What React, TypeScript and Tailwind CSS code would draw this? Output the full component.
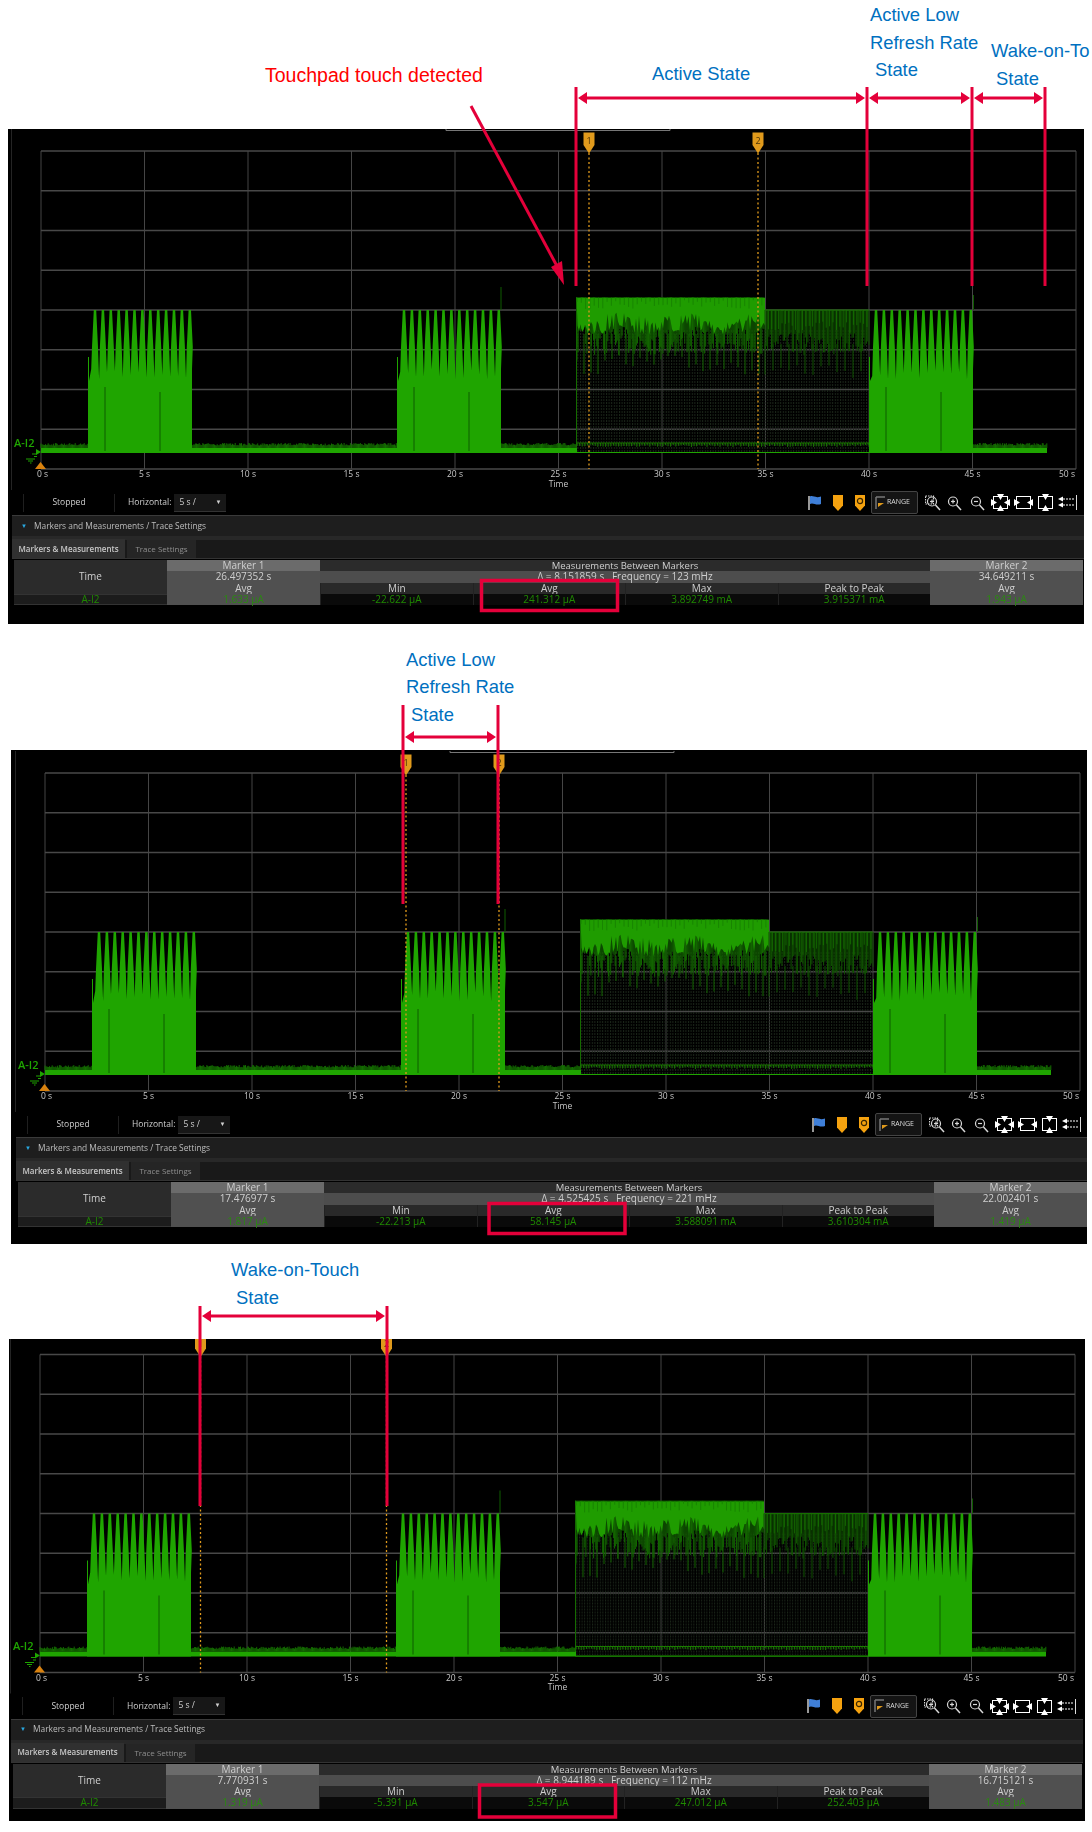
import * as React from 'react';

type ScopeProps = {
  crop: number;
  bottom: string;
  className: string;
  inner: string;
  markers: [number, number];
  marker1: string;
  marker2: string;
  avg1: string;
  avg2: string;
  delta: string;
  min: string;
  avg: string;
  max: string;
  p2p: string;
};

const AMBER = '#e09a1c';
const GREEN = '#1fa500';

// small repeatable random so the trace looks the same on each run
let seed = 7;
const rnd = () => {
  seed = (seed * 16807) % 2147483647;
  return seed / 2147483647;
};

const hairs = (x0: number, x1: number, step: number, y0: number, minY: number, maxY: number) => {
  let d = '';
  for (let x = x0; x < x1; x += step) {
    d += `M${x.toFixed(1)} ${y0}V${(minY + rnd() * (maxY - minY)).toFixed(1)}`;
  }
  return d;
};

const burstPath = (x0: number) => {
  let d = `M${x0} 324V228H${x0 + 1}V252`;
  for (let i = 0; i < 13; i++) {
    const peak = x0 + 7 + i * 7.9;
    const floor = 240 + rnd() * 11;
    d += `L${(peak - 3.8).toFixed(1)} ${floor.toFixed(1)}L${(peak - 3).toFixed(1)} 218L${(peak - 1.2).toFixed(1)} 181H${(peak + 1.2).toFixed(1)}L${(peak + 3).toFixed(1)} 218`;
  }
  d += `L${x0 + 104} 240V324Z`;
  return d;
};

const activeEdge = () => {
  let d = 'M568.6 169H757V196';
  for (let x = 755.5; x > 568; x -= 1.5) {
    d += `L${x} ${(186 + Math.sin(x * 0.09) * 3 + rnd() * 19).toFixed(1)}`;
  }
  return `${d}Z`;
};

const BURSTS = [80, 389, 861].map(burstPath);
const ACTIVE = activeEdge();
const ACTIVE_TEXTURE = hairs(569, 757, 4.3, 168.6, 171, 180);
const ACTIVE_FRINGE = hairs(569, 757, 1.1, 168, 198, 226) + hairs(569, 757, 7, 205, 226, 246);
const LOW_FRINGE = hairs(757, 861, 1.3, 181, 204, 226) + hairs(757, 861, 8, 215, 232, 250);
const LOW_LIGHT = hairs(757, 861, 3.4, 181, 192, 206);
const NOISE = [
  [33, 80],
  [184, 389],
  [493, 568],
  [965, 1039],
]
  .map(([a, b]) => hairs(a, b, 0.9, 319, 314, 316.5))
  .join('');
const TICKS = hairs(569, 861, 2.6, 314, 316, 318);

const Plot = (props: { crop: number; markers: [number, number]; id: string }) => {
  const height = 361 - props.crop;
  const gridX = Array.from({ length: 11 }, (_, i) => 33 + i * 103.5);
  const gridY = Array.from({ length: 9 }, (_, i) => 22 + i * 39.75);

  return (
    <svg
      className="block"
      width={1076}
      height={height}
      viewBox={`0 ${props.crop} 1076 ${height}`}
      style={{ fontFamily: '"Open Sans", sans-serif' }}
    >
      <defs>
        <pattern id={props.id} width="2.6" height="3" patternUnits="userSpaceOnUse">
          <rect width="1" height="2" fill="#1b261a" />
        </pattern>
      </defs>
      <path d="M438 0V1.5H662V0" fill="none" stroke="#777" />
      <rect x="3" y="0" width="1" height="361" fill="#242424" />

      {gridX.map((x) => (
        <line key={x} x1={x} x2={x} y1={22} y2={340} stroke="#454545" />
      ))}
      {gridY.map((y) => (
        <line key={y} x1={33} x2={1068} y1={y} y2={y} stroke="#484848" strokeWidth={1.5} />
      ))}

      <rect x="569" y="200" width="292" height="124" fill={`url(#${props.id})`} />
      <path d="M568.5 168V324" stroke="#156b00" />
      <path d={TICKS} stroke="#1a7a00" />
      <path d="M569 314H861M569 323.5H861" stroke="#1a7a00" />
      <path d={ACTIVE_FRINGE} stroke="#126400" />
      <path d={ACTIVE} fill="#1f9c00" />
      <path d={ACTIVE_TEXTURE} stroke="#178200" strokeWidth={0.9} />
      <path d={LOW_FRINGE} stroke="#0f5300" />
      <path d={LOW_LIGHT} stroke="#187a00" strokeWidth={0.7} />
      <path d="M757 181H861" stroke="#167000" />

      <rect x="33" y="319" width="1006" height="5" fill={GREEN} />
      <rect x="569" y="318" width="292" height="5" fill="#000" />
      <rect x="569" y="318" width="292" height="5" fill={`url(#${props.id})`} />
      <path d={NOISE} stroke="#146d00" />
      {BURSTS.map((d) => (
        <path key={d} d={d} fill={GREEN} />
      ))}
      <path
        d="M493 181V158M965.5 181V166M97 322V258M152 322V263M406 322V258M461 322V263M878 322V258M933 322V263"
        stroke="#0f5c00"
      />

      {gridX.map((x, i) => {
        const labelX = i === 0 ? 34.5 : i === 10 ? 1059 : x;
        return (
          <text key={x} x={labelX} y={348} fontSize="8.5" fill="#c8c8c8" textAnchor="middle">
            {i * 5} s
          </text>
        );
      })}
      <text x={550.5} y={357.5} fontSize="8.5" fill="#c8c8c8" textAnchor="middle">
        Time
      </text>

      <text x={6} y={317.5} fontSize="11" fill={GREEN} fontWeight="600">
        A-I2
      </text>
      <path d="M24 325H29M26 327.5H29M18 330H27M20 332H25M22 334H23.5" stroke={GREEN} fill="none" />
      <path d="M28 320L33 323L28 326Z" fill={GREEN} />
      <path d="M27 340L32.5 333L38 340Z" fill="#d9820f" />

      {props.markers.map((x, i) => (
        <g key={x}>
          <line x1={x} x2={x} y1={24} y2={340} stroke={AMBER} strokeWidth={1.3} strokeDasharray="2 2.5" />
          <path d={`M${x - 5.5} 3.5H${x + 5.5}V16L${x} 24.5L${x - 5.5} 16Z`} fill={AMBER} />
          <text x={x} y={14.5} fontSize="9" fill="#4a3205" textAnchor="middle">
            {i + 1}
          </text>
        </g>
      ))}
    </svg>
  );
};

const Flag = () => (
  <svg width="14" height="16" viewBox="0 0 14 16">
    <path d="M1 1V15" stroke="#fff" strokeWidth="1.2" />
    <path d="M2 1.5C5 0 7 3.5 13 1.5V9C8 11 5 7 2 9Z" fill="#3f7fd8" />
  </svg>
);

const MarkerIcon = () => (
  <svg width="10" height="16" viewBox="0 0 10 16">
    <path d="M0 0H10V10.5L5 16L0 10.5Z" fill="#f5a20f" />
  </svg>
);

const MarkerCycleIcon = () => (
  <svg width="10" height="16" viewBox="0 0 10 16">
    <path d="M0 0H10V10.5L5 16L0 10.5Z" fill="#f5a20f" />
    <circle cx="5" cy="6" r="2.6" fill="none" stroke="#3a2600" strokeWidth="1.2" />
  </svg>
);

const Lens = (props: { mark: 'plus' | 'minus' | 'box' }) => (
  <svg width="16" height="16" viewBox="0 0 16 16" fill="none" stroke="#d8d8d8" strokeWidth="1.2">
    {props.mark === 'box' ? <rect x="0.5" y="1" width="8" height="8" strokeDasharray="1.5 1" /> : null}
    <circle cx="7" cy="6.5" r="4.5" />
    <path d="M10.5 10L15 15" strokeWidth="1.5" />
    <path d="M5 6.5H9" />
    {props.mark === 'minus' ? null : <path d="M7 4.5V8.5" />}
  </svg>
);

const Fit = (props: { kind: 'all' | 'h' | 'v' }) => (
  <svg width="19" height="17" viewBox="0 0 19 17" fill="#fff">
    <rect x="2.5" y="2.5" width="14" height="12" fill="none" stroke="#fff" />
    {props.kind !== 'v' ? <path d="M0 5L6 8.5L0 12ZM19 5L13 8.5L19 12Z" /> : null}
    {props.kind !== 'h' ? <path d="M6 0L9.5 6L13 0ZM6 17L9.5 11L13 17Z" /> : null}
  </svg>
);

const Pan = () => (
  <svg width="19" height="15" viewBox="0 0 19 15" fill="#fff">
    <path d="M18.5 0V15" stroke="#ddd" />
    <path d="M5 4H16M5 10H16" stroke="#fff" strokeDasharray="2 1" />
    <path d="M0 4L5 1.5V6.5ZM0 10L5 7.5V12.5Z" />
  </svg>
);

const Toolbar = () => (
  <div className="flex h-[25px] items-center text-[8.5px] text-[#cfcfcf]">
    <div className="ml-[15px] flex h-[18px] w-[92px] items-center justify-center border-x border-[#1f1f1f]">Stopped</div>
    <span className="ml-[13px]">Horizontal:</span>
    <div className="ml-[3px] flex h-[18px] w-[52px] items-center justify-between border-b border-[#333] bg-[#171717] px-[5px]">
      <span>5 s /</span>
      <span className="text-[6px]">▼</span>
    </div>
    <div className="mr-[7px] ml-auto flex items-center">
      <Flag />
      <div className="ml-[11px]">
        <MarkerIcon />
      </div>
      <div className="ml-[12px]">
        <MarkerCycleIcon />
      </div>
      <div className="ml-[6px] flex h-[23px] w-[47px] items-center gap-[2px] rounded-[2px] border border-[#444] bg-[#141414] pl-[3px] text-[7px] text-[#ddd]">
        <svg width="10" height="14" viewBox="0 0 10 14">
          <path d="M1 1H10M1 1V13" stroke="#777" strokeWidth="1.5" />
          <path d="M3 5V11L9 7H3Z" fill="#e09a1c" />
        </svg>
        RANGE
      </div>
      <div className="ml-[7px]">
        <Lens mark="box" />
      </div>
      <div className="ml-[5px]">
        <Lens mark="plus" />
      </div>
      <div className="ml-[7px]">
        <Lens mark="minus" />
      </div>
      <div className="ml-[6px]">
        <Fit kind="all" />
      </div>
      <div className="ml-[4px]">
        <Fit kind="h" />
      </div>
      <div className="ml-[3px]">
        <Fit kind="v" />
      </div>
      <div className="ml-[3px]">
        <Pan />
      </div>
    </div>
  </div>
);

const Cell = (props: { className: string; children?: React.ReactNode }) => (
  <div className={`flex items-center justify-center whitespace-pre ${props.className}`}>{props.children}</div>
);

const Readings = (props: ScopeProps) => {
  const columns = [
    ['Min', props.min],
    ['Avg', props.avg],
    ['Max', props.max],
    ['Peak to Peak', props.p2p],
  ];

  return (
    <div className="mt-[1px] ml-[2px] grid w-[1069px] grid-cols-[153px_153px_repeat(4,152.5px)_153px] grid-rows-[repeat(4,11.25px)] text-[10px] leading-[11px] text-[#cfcfcf]">
      <Cell className="col-start-1 row-span-3 row-start-1 bg-[#2b2b2b]">Time</Cell>
      <Cell className="col-start-1 row-start-4 border-y border-[#333] bg-[#1c1c1c] text-[#1f8a00]">A-I2</Cell>

      <Cell className="col-start-2 row-start-1 bg-[#6b6b6b]">Marker 1</Cell>
      <Cell className="col-start-2 row-start-2 bg-[#505050]">{props.marker1}</Cell>
      <Cell className="col-start-2 row-start-3 bg-[#505050]">Avg</Cell>
      <Cell className="col-start-2 row-start-4 bg-[#505050] text-[#2a8a10]">{props.avg1}</Cell>

      <Cell className="col-span-4 col-start-3 row-start-1 bg-[#2b2b2b] text-[9.5px]">Measurements Between Markers</Cell>
      <Cell className="col-span-4 col-start-3 row-start-2 bg-[#4d4d4d]">{props.delta}</Cell>
      {columns.map(([label, value], i) => (
        <React.Fragment key={label}>
          <Cell className="row-start-3 border-l border-[#222] bg-[#292929]">{label}</Cell>
          <Cell className={`row-start-4 border-l border-[#222] bg-[#0a0a0a] text-[#1f8a00] ${i === 0 ? 'col-start-3' : ''}`}>
            {value}
          </Cell>
        </React.Fragment>
      ))}

      <Cell className="col-start-7 row-start-1 bg-[#6b6b6b]">Marker 2</Cell>
      <Cell className="col-start-7 row-start-2 bg-[#505050]">{props.marker2}</Cell>
      <Cell className="col-start-7 row-start-3 bg-[#505050]">Avg</Cell>
      <Cell className="col-start-7 row-start-4 bg-[#505050] text-[#2a8a10]">{props.avg2}</Cell>
    </div>
  );
};

const Scope = (props: ScopeProps & { id: string }) => (
  <div className={`w-[1076px] overflow-hidden bg-black font-['Open_Sans',sans-serif] ${props.className} ${props.bottom}`}>
    <div className={`w-[1076px] blur-[0.35px] ${props.inner}`}>
      <Plot crop={props.crop} markers={props.markers} id={props.id} />
      <Toolbar />
      <div className="ml-[4px] border-t border-[#3a3a3a]">
        <div className="flex h-[20px] items-center gap-[7px] bg-[#1e1e1e] pl-[9px] text-[8.4px] text-[#bdbdbd]">
          <span className="text-[6px] text-[#29a8e0]">▼</span>
          Markers and Measurements / Trace Settings
        </div>
        <div className="h-[4px] bg-[#282828]" />
        <div className="flex h-[19px] items-end gap-[2px] border-b border-[#333] bg-[#191919] text-[8px]">
          <div className="flex h-[19px] w-[113px] items-center justify-center bg-[#303030] font-semibold text-[#c8c8c8]">
            Markers &amp; Measurements
          </div>
          <div className="flex h-[18px] w-[69px] items-center justify-center bg-[#252525] text-[#8f8f8f]">
            Trace Settings
          </div>
        </div>
        <Readings {...props} />
      </div>
    </div>
  </div>
);

const Bracket = (props: { xs: number[]; top: number; bottom: number; y: number }) => (
  <g>
    {props.xs.map((x) => (
      <line key={x} x1={x} x2={x} y1={props.top} y2={props.bottom} stroke="#e4003a" strokeWidth={3} />
    ))}
    {props.xs.slice(1).map((x, i) => {
      const from = props.xs[i];
      return (
        <path
          key={x}
          d={`M${from + 2} ${props.y}l9 -6v4.5H${x - 11}v-4.5l9 6l-9 6v-4.5H${from + 11}v4.5Z`}
          fill="#e4003a"
        />
      );
    })}
  </g>
);

const labels = [
  { text: 'Touchpad touch detected', x: 265, y: 65, color: 'text-[#ff0000] text-[19.5px]' },
  { text: 'Active State', x: 652, y: 64 },
  { text: 'Active Low', x: 870, y: 5 },
  { text: 'Refresh Rate', x: 870, y: 33 },
  { text: 'State', x: 875, y: 60 },
  { text: 'Wake-on-To', x: 991, y: 41 },
  { text: 'State', x: 996, y: 69 },
  { text: 'Active Low', x: 406, y: 650 },
  { text: 'Refresh Rate', x: 406, y: 677 },
  { text: 'State', x: 411, y: 705 },
  { text: 'Wake-on-Touch', x: 231, y: 1260 },
  { text: 'State', x: 236, y: 1288 },
];

const Annotations = () => (
  <>
    <svg className="pointer-events-none absolute top-0 left-0" width="1092" height="1832" fill="none">
      <Bracket xs={[576, 867, 972, 1045]} top={87} bottom={286} y={98} />
      <path d="M471 106L558 268" stroke="#e4003a" strokeWidth={3} />
      <path d="M564 285L551 267L562 261Z" fill="#e4003a" />
      <Bracket xs={[403, 498]} top={705} bottom={904} y={737} />
      <Bracket xs={[200, 387]} top={1306} bottom={1506} y={1316} />
      <rect x="481.5" y="580.5" width="136" height="30" stroke="#e4003a" strokeWidth={3.5} />
      <rect x="489" y="1203.5" width="136" height="30" stroke="#e4003a" strokeWidth={3.5} />
      <rect x="479.5" y="1785" width="136" height="32" stroke="#e4003a" strokeWidth={3.5} />
    </svg>
    {labels.map((label) => (
      <span
        key={`${label.text}-${label.y}`}
        className={`absolute font-['Liberation_Sans',sans-serif] leading-[20px] whitespace-nowrap ${label.color ?? 'text-[18.4px] text-[#0070c0]'}`}
        style={{ left: label.x, top: label.y }}
      >
        {label.text}
      </span>
    ))}
  </>
);

export default function App() {
  return (
    <div className="relative h-[1832px] w-[1092px] overflow-hidden bg-white pt-[129px]">
      <Scope
        id="dots-a"
        crop={0}
        bottom="pb-[19px]"
        className="ml-[8px]"
        inner=""
        markers={[581, 750]}
        marker1="26.497352 s"
        marker2="34.649211 s"
        avg1="1.633 µA"
        avg2="1.943 µA"
        delta="Δ = 8.151859 s   Frequency = 123 mHz"
        min="-22.622 µA"
        avg="241.312 µA"
        max="3.892749 mA"
        p2p="3.915371 mA"
      />
      <Scope
        id="dots-b"
        crop={-1}
        bottom="pb-[17px]"
        className="mt-[126px] ml-[11px]"
        inner="ml-[1px]"
        markers={[394, 487]}
        marker1="17.476977 s"
        marker2="22.002401 s"
        avg1="1.817 µA"
        avg2="1.419 µA"
        delta="Δ = 4.525425 s   Frequency = 221 mHz"
        min="-22.213 µA"
        avg="58.145 µA"
        max="3.588091 mA"
        p2p="3.610304 mA"
      />
      <Scope
        id="dots-c"
        crop={6.5}
        bottom="pb-[12.5px]"
        className="mt-[95px] ml-[9px]"
        inner="-ml-[2px]"
        markers={[193.5, 379.5]}
        marker1="7.770931 s"
        marker2="16.715121 s"
        avg1="1.319 µA"
        avg2="1.483 µA"
        delta="Δ = 8.944189 s   Frequency = 112 mHz"
        min="-5.391 µA"
        avg="3.547 µA"
        max="247.012 µA"
        p2p="252.403 µA"
      />
      <Annotations />
    </div>
  );
}
